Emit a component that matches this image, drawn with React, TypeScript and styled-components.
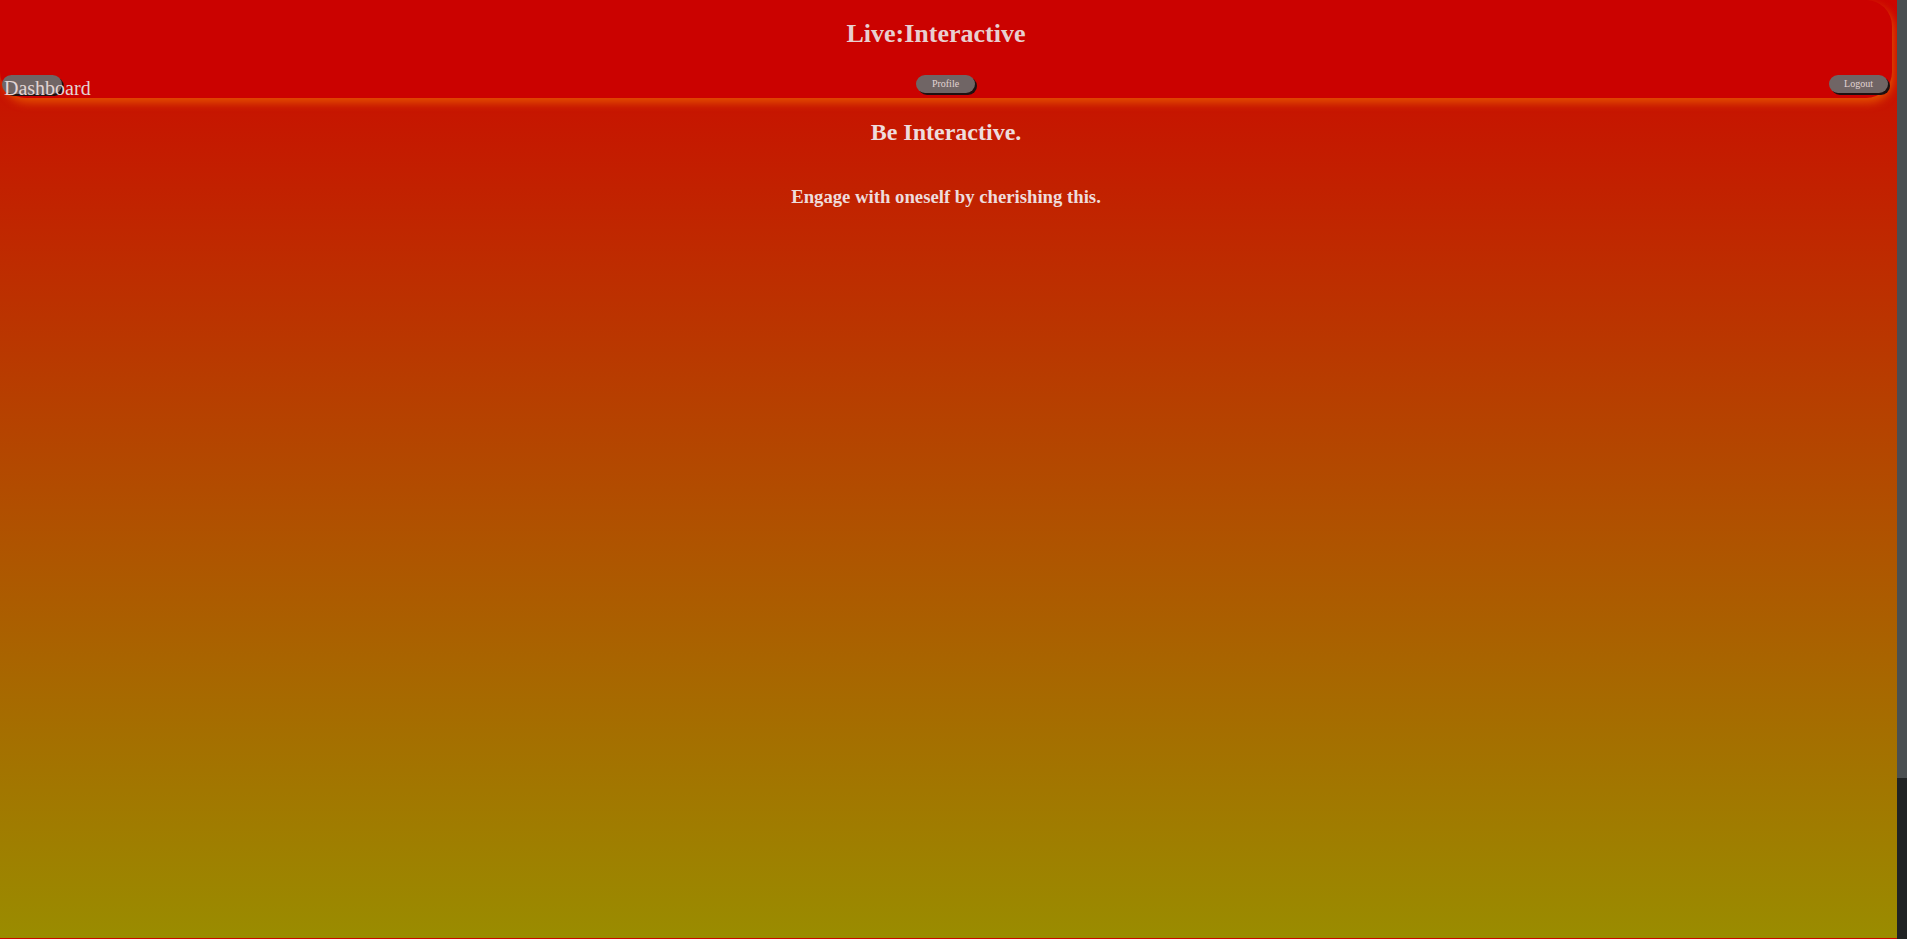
import React from "react";
import styled, { createGlobalStyle } from "styled-components";

const GlobalStyle = createGlobalStyle`
  html {
    margin: 0;
    background-color: #9a8c00;
    background-image: linear-gradient(180deg, #cc0600 0%, #9a8c00 100%);
    background-size: 100% 938px;
    background-repeat: repeat-y;
  }
  body {
    margin: 0;
    font-family: "Liberation Serif", "Times New Roman", serif;
    overflow: hidden;
  }
`;

const Page = styled.div`
  min-height: 100vh;
  padding-right: 10px;
  display: flex;
  flex-direction: column;
`;

const ScrollTrack = styled.div`
  position: fixed;
  top: 0;
  right: 0;
  width: 10px;
  height: 100vh;
  background: #202324;
`;

const ScrollThumb = styled.div`
  height: 778px;
  background: #4a4f51;
`;

const Header = styled.header`
  background: #cb0200;
  border-radius: 0 26px 26px 26px;
  box-shadow: 2px 5px 9px #e34d00;
  margin-right: 5px;
  padding: 19px 4px 4px 2px;
  display: flex;
  flex-direction: column;
  gap: 26px;
`;

const Title = styled.h1`
  margin: 0;
  font-size: 26px;
  line-height: 30px;
  font-weight: bold;
  text-align: center;
  color: #e8cfd0;
  padding-right: 18px;
`;

const Nav = styled.nav`
  display: flex;
  justify-content: space-between;
  align-items: flex-start;
`;

const NavButton = styled.button<{ $large?: boolean }>`
  box-sizing: border-box;
  width: ${(p) => (p.$large ? "60px" : "59px")};
  height: ${(p) => (p.$large ? "19px" : "18px")};
  border: none;
  border-radius: 10px;
  background: #706565;
  box-shadow: 2px 2px 0 #1e1010;
  color: #e2d4d4;
  font-family: "Liberation Serif", "Times New Roman", serif;
  font-size: ${(p) => (p.$large ? "20px" : "10px")};
  line-height: ${(p) => (p.$large ? "20px" : "18px")};
  padding: ${(p) => (p.$large ? "3px 0 0 2px" : "0")};
  text-align: ${(p) => (p.$large ? "left" : "center")};
  white-space: nowrap;
  overflow: visible;
  cursor: pointer;
`;

const Main = styled.main`
  display: flex;
  flex-direction: column;
  align-items: center;
  padding-right: 5px;
  color: #eedcdc;
`;

const Heading = styled.h2`
  margin: 20px 0 0;
  font-size: 24px;
  line-height: 28px;
  font-weight: bold;
`;

const Sub = styled.h3`
  margin: 40px 0 0;
  font-size: 18.72px;
  line-height: 22px;
  font-weight: bold;
`;

export default function App() {
  return (
    <>
      <GlobalStyle />
      <Page>
        <Header>
          <Title>Live:Interactive</Title>
          <Nav>
            <NavButton $large>Dashboard</NavButton>
            <NavButton>Profile</NavButton>
            <NavButton>Logout</NavButton>
          </Nav>
        </Header>
        <Main>
          <Heading>Be Interactive.</Heading>
          <Sub>Engage with oneself by cherishing this.</Sub>
        </Main>
      </Page>
      <ScrollTrack>
        <ScrollThumb />
      </ScrollTrack>
    </>
  );
}
